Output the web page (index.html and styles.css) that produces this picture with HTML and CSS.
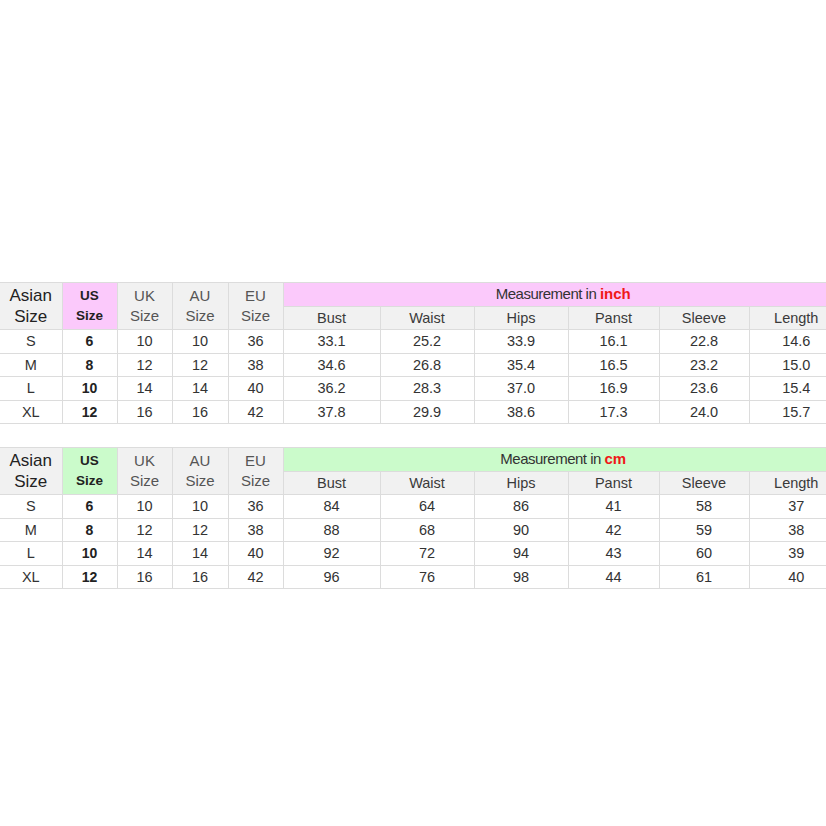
FILE: index.html
```html
<!DOCTYPE html>
<html>
<head>
<meta charset="utf-8">
<link rel="stylesheet" href="styles.css">
</head>
<body>
<div class="page">
  <table class="chart">
    <colgroup>
      <col class="c-asian"><col class="c-us"><col class="c-uk"><col class="c-au"><col class="c-eu">
      <col class="c-bust"><col class="c-waist"><col class="c-hips"><col class="c-panst"><col class="c-sleeve"><col class="c-length">
    </colgroup>
    <tr class="h1">
      <th rowspan="2" class="asian">Asian<br>Size</th>
      <th rowspan="2" class="us pink">US<br>Size</th>
      <th rowspan="2" class="sz">UK<br>Size</th>
      <th rowspan="2" class="sz">AU<br>Size</th>
      <th rowspan="2" class="sz">EU<br>Size</th>
      <th colspan="6" class="meas pink">Measurement in <span class="unit">inch</span></th>
    </tr>
    <tr class="h2">
      <th>Bust</th><th>Waist</th><th>Hips</th><th>Panst</th><th>Sleeve</th><th>Length</th>
    </tr>
    <tr><td>S</td><td class="b">6</td><td>10</td><td>10</td><td>36</td><td>33.1</td><td>25.2</td><td>33.9</td><td>16.1</td><td>22.8</td><td>14.6</td></tr>
    <tr><td>M</td><td class="b">8</td><td>12</td><td>12</td><td>38</td><td>34.6</td><td>26.8</td><td>35.4</td><td>16.5</td><td>23.2</td><td>15.0</td></tr>
    <tr><td>L</td><td class="b">10</td><td>14</td><td>14</td><td>40</td><td>36.2</td><td>28.3</td><td>37.0</td><td>16.9</td><td>23.6</td><td>15.4</td></tr>
    <tr><td>XL</td><td class="b">12</td><td>16</td><td>16</td><td>42</td><td>37.8</td><td>29.9</td><td>38.6</td><td>17.3</td><td>24.0</td><td>15.7</td></tr>
  </table>

  <table class="chart second">
    <colgroup>
      <col class="c-asian"><col class="c-us"><col class="c-uk"><col class="c-au"><col class="c-eu">
      <col class="c-bust"><col class="c-waist"><col class="c-hips"><col class="c-panst"><col class="c-sleeve"><col class="c-length">
    </colgroup>
    <tr class="h1">
      <th rowspan="2" class="asian">Asian<br>Size</th>
      <th rowspan="2" class="us green">US<br>Size</th>
      <th rowspan="2" class="sz">UK<br>Size</th>
      <th rowspan="2" class="sz">AU<br>Size</th>
      <th rowspan="2" class="sz">EU<br>Size</th>
      <th colspan="6" class="meas green">Measurement in <span class="unit">cm</span></th>
    </tr>
    <tr class="h2">
      <th>Bust</th><th>Waist</th><th>Hips</th><th>Panst</th><th>Sleeve</th><th>Length</th>
    </tr>
    <tr><td>S</td><td class="b">6</td><td>10</td><td>10</td><td>36</td><td>84</td><td>64</td><td>86</td><td>41</td><td>58</td><td>37</td></tr>
    <tr><td>M</td><td class="b">8</td><td>12</td><td>12</td><td>38</td><td>88</td><td>68</td><td>90</td><td>42</td><td>59</td><td>38</td></tr>
    <tr><td>L</td><td class="b">10</td><td>14</td><td>14</td><td>40</td><td>92</td><td>72</td><td>94</td><td>43</td><td>60</td><td>39</td></tr>
    <tr><td>XL</td><td class="b">12</td><td>16</td><td>16</td><td>42</td><td>96</td><td>76</td><td>98</td><td>44</td><td>61</td><td>40</td></tr>
  </table>
</div>
</body>
</html>
```

FILE: styles.css
```css
html, body {
  margin: 0;
  padding: 0;
  background: #ffffff;
  overflow: hidden;
}
.page {
  padding-top: 282px;
  width: 843px;
  display: flex;
  flex-direction: column;
  gap: 23px;
}
.chart {
  border-collapse: collapse;
  table-layout: fixed;
  width: 843px;
  font-family: "Liberation Sans", Arial, sans-serif;
  color: #2b2b2b;
}
.c-asian { width: 62px; }
.c-us { width: 55px; }
.c-uk { width: 55px; }
.c-au { width: 56px; }
.c-eu { width: 55px; }
.c-bust { width: 97px; }
.c-waist { width: 94px; }
.c-hips { width: 94px; }
.c-panst { width: 91px; }
.c-sleeve { width: 90px; }
.c-length { width: 94px; }

.chart th, .chart td {
  border: 1px solid #dcdcdc;
  padding: 0;
  text-align: center;
  vertical-align: middle;
  font-weight: normal;
}
.chart tr > :first-child { border-left: none; }
.chart tr > :last-child { border-right: none; }
.chart tr { height: 23.5px; }
.chart td {
  font-size: 14.5px;
  line-height: 18px;
  color: #333;
  background: #fff;
}
.chart th {
  background: #f1f1f1;
  line-height: 20px;
}
.chart th.asian {
  font-size: 17px;
  line-height: 21px;
  color: #222;
}
.chart th.sz {
  font-size: 15px;
  color: #555;
}
.chart th.us {
  font-size: 13.5px;
  font-weight: bold;
  color: #222;
}
.chart .h2 th {
  font-size: 14.5px;
  color: #3a3a3a;
  line-height: 18px;
}
.chart th.meas {
  font-size: 15px;
  letter-spacing: -0.5px;
  color: #333;
  line-height: 18px;
}
.chart th.pink { background: #fbc9fb; }
.chart th.green { background: #cbfbcb; }
.unit {
  color: #f01818;
  font-weight: bold;
  letter-spacing: 0;
}
.chart td.b {
  font-weight: bold;
  font-size: 14px;
  color: #222;
}
```
